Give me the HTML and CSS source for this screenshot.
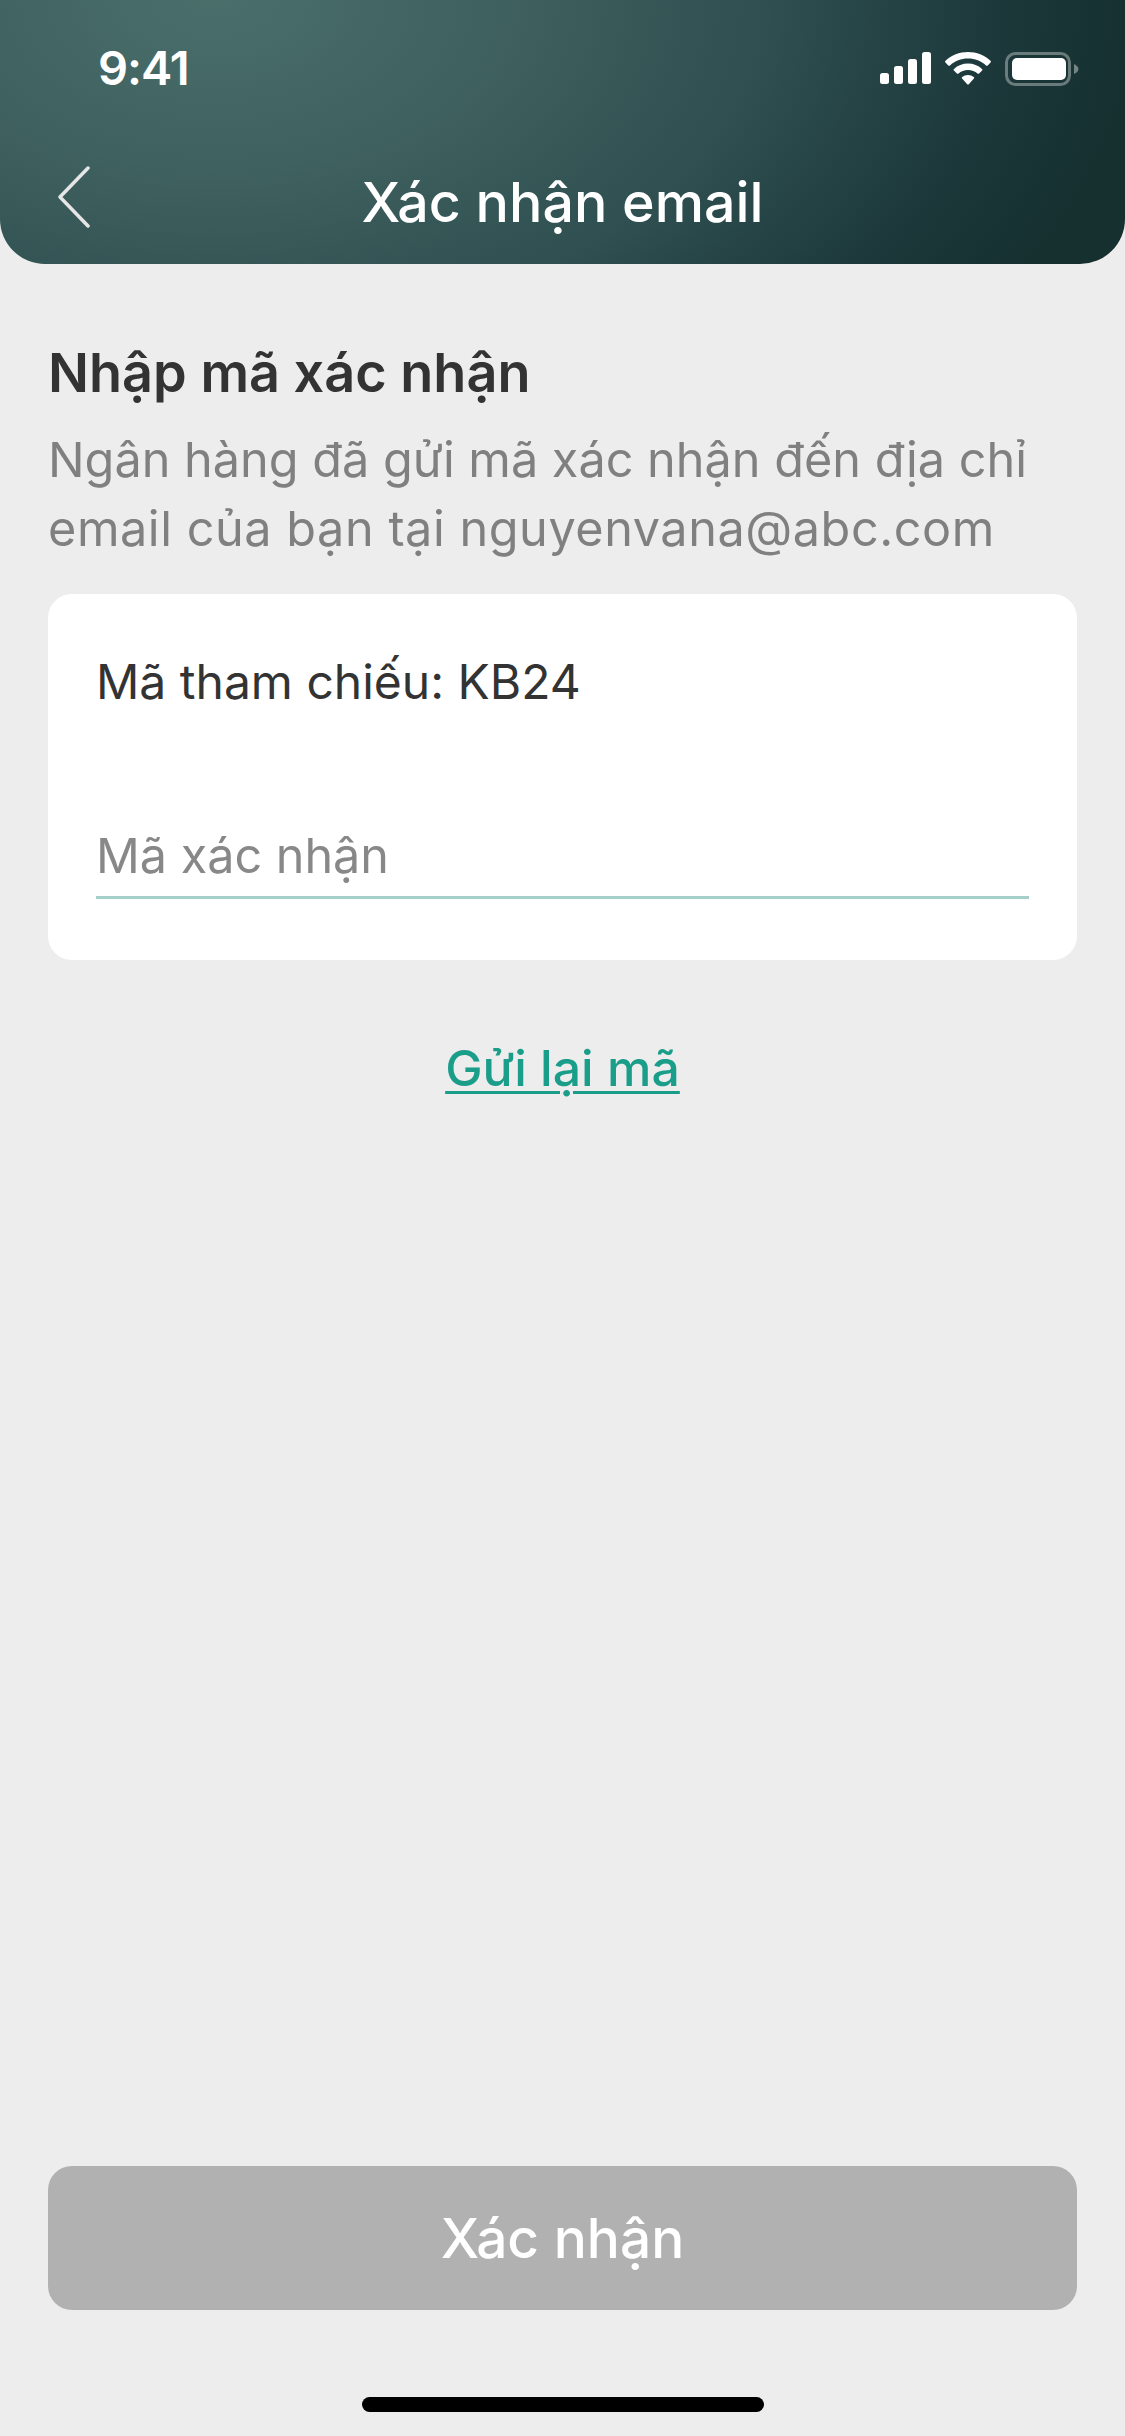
FILE: index.html
```html
<!DOCTYPE html>
<html lang="vi">

<head>
    <meta charset="UTF-8">
    <meta name="viewport" content="width=device-width, initial-scale=1.0">
    <title>Xác nhận email</title>
    <link rel="stylesheet" href="styles.css">
</head>

<body>
    <div class="screen">
        <!-- Cabecera con barra de estado -->
        <header class="header">
            <div class="status-bar">
                <span class="clock">9:41</span>
                <div class="status-icons">
                    <svg class="icon-signal" width="51" height="32" viewBox="0 0 51 32" fill="#fff">
                        <rect x="0" y="21" width="9" height="11" rx="2.5" />
                        <rect x="14" y="14" width="9" height="18" rx="2.5" />
                        <rect x="28" y="7" width="9" height="25" rx="2.5" />
                        <rect x="42" y="0" width="9" height="32" rx="2.5" />
                    </svg>
                    <svg class="icon-wifi" width="46" height="33" viewBox="0 0 46 33" fill="#fff">
                        <path d="M23 0C14.400 0 6.500 3.300 0.500 8.800C0 9.300 0 10 .4 10.400L3.300 13.400C3.800 13.900 4.500 13.900 5 13.400C9.800 9.100 16.100 6.500 23 6.500C29.900 6.500 36.200 9.100 41 13.400C41.500 13.900 42.200 13.900 42.700 13.400L45.600 10.400C46 10 46 9.300 45.500 8.800C39.500 3.300 31.600 0 23 0Z" />
                        <path d="M23 11.500C17.600 11.500 12.700 13.500 9 16.900C8.500 17.300 8.500 18 8.900 18.400L11.900 21.500C12.300 21.900 13 22 13.500 21.600C16 19.400 19.300 18 23 18C26.700 18 30 19.400 32.500 21.600C33 22 33.700 21.900 34.100 21.500L37.100 18.400C37.500 18 37.500 17.300 37 16.900C33.300 13.500 28.400 11.500 23 11.500Z" />
                        <path d="M23 23C20.800 23 18.800 23.800 17.200 25.100C16.700 25.500 16.700 26.200 17.100 26.600L22.200 32.200C22.600 32.700 23.400 32.700 23.800 32.200L28.900 26.600C29.300 26.200 29.300 25.500 28.800 25.100C27.200 23.800 25.200 23 23 23Z" />
                    </svg>
                    <svg class="icon-battery" width="74" height="34" viewBox="0 0 74 34" fill="none">
                        <rect x="1.500" y="1.500" width="63" height="31" rx="9" stroke="#fff" stroke-opacity="0.35" stroke-width="3" />
                        <rect x="7" y="6" width="54" height="22" rx="5" fill="#fff" />
                        <path d="M69 12C71.500 13 73.500 15 73.500 17C73.500 19 71.500 21 69 22Z" fill="#fff" fill-opacity="0.4" />
                    </svg>
                </div>
            </div>
            <div class="nav-bar">
                <svg class="icon-back" width="32" height="62" viewBox="0 0 32 62" fill="none">
                    <path d="M30 2L2 31L30 60" stroke="#e6e6e6" stroke-width="3.500" stroke-linecap="round" stroke-linejoin="round" />
                </svg>
                <h1 class="nav-title">Xác nhận email</h1>
            </div>
        </header>

        <main class="content">
            <h2 class="heading">Nhập mã xác nhận</h2>
            <p class="intro">Ngân hàng đã gửi mã xác nhận đến địa chỉ<br><span class="intro-email">email của bạn tại nguyenvana@abc.com</span></p>

            <div class="card">
                <div class="reference">Mã tham chiếu: KB24</div>
                <div class="code-field">Mã xác nhận</div>
            </div>

            <a class="resend" href="#">Gửi lại mã</a>

            <button class="confirm" type="button">Xác nhận</button>
        </main>

        <div class="home-bar"></div>
    </div>
</body>

</html>
```

FILE: styles.css
```css
* {
    box-sizing: border-box;
}

body {
    margin: 0;
    background-color: #ededed;
    font-family: Inter, "Noto Sans", Arial, sans-serif;
}

.screen {
    width: 1125px;
    height: 2436px;
    display: flex;
    flex-direction: column;
    overflow: hidden;
}

/* Cabecera */
.header {
    height: 264px;
    flex-shrink: 0;
    border-radius: 0 0 45px 45px;
    background: radial-gradient(ellipse 920px 560px at 215px 0, #4a6f6b 0%, #3f615f 30%, #2f4f50 60%, #1c383a 85%, #15302f 100%);
    color: #fff;
}

.status-bar {
    height: 136px;
    padding: 42px 46px 0 98px;
    display: flex;
    justify-content: space-between;
    align-items: flex-start;
}

.clock {
    font-size: 47px;
    font-weight: 600;
    line-height: 52px;
    letter-spacing: -1px;
}

.status-icons {
    display: flex;
    align-items: flex-start;
    gap: 14px;
    padding-top: 10px;
}

.nav-bar {
    position: relative;
    display: flex;
    justify-content: center;
}

.icon-back {
    position: absolute;
    left: 58px;
    top: 30px;
}

.nav-title {
    margin: 0;
    font-size: 55.5px;
    font-weight: 500;
    line-height: 66px;
    padding-top: 33px;
}

/* Contenido */
.content {
    flex: 1;
    display: flex;
    flex-direction: column;
    padding: 0 48px;
}

.heading {
    margin: 78px 0 0;
    font-size: 54px;
    font-weight: 600;
    line-height: 62px;
    color: #333;
}

.intro {
    margin: 21px 0 0;
    font-size: 48.6px;
    line-height: 69px;
    color: #808080;
}

.intro-email {
    letter-spacing: 0.55px;
}

.card {
    margin-top: 31px;
    height: 366px;
    padding: 58px 48px 0;
    background-color: #fff;
    border-radius: 24px;
}

.reference {
    font-size: 48px;
    line-height: 60px;
    color: #333;
}

.code-field {
    margin-top: 114px;
    height: 73px;
    font-size: 48.5px;
    line-height: 60px;
    color: #888;
    border-bottom: 3px solid #a5d0ca;
}

.resend {
    align-self: center;
    margin-top: 77px;
    font-size: 50px;
    font-weight: 500;
    line-height: 62px;
    color: #1a9e8a;
    text-decoration: underline;
    text-decoration-thickness: 3px;
    text-underline-offset: 5px;
}

.confirm {
    margin-top: auto;
    height: 144px;
    border: none;
    border-radius: 24px;
    background-color: #b1b1b1;
    color: #fff;
    font-family: inherit;
    font-size: 55px;
    font-weight: 500;
}

.home-bar {
    width: 402px;
    height: 15px;
    margin: 87px auto 24px;
    flex-shrink: 0;
    background-color: #000;
    border-radius: 8px;
}
```
